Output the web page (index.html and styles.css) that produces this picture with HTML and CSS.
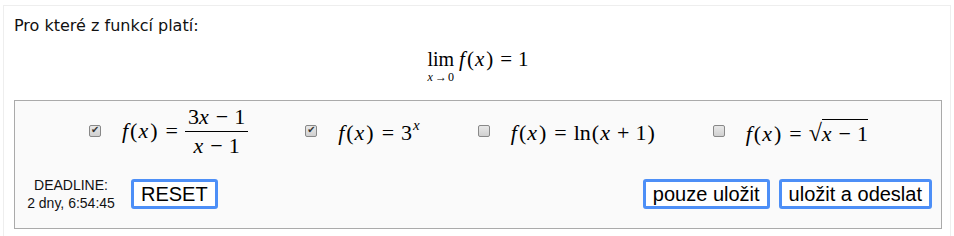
FILE: index.html
```html
<!DOCTYPE html>
<html lang="cs">
<head>
	<meta charset="UTF-8">
	<title>Úloha</title>
	<link rel="stylesheet" href="styles.css">
</head>
<body>
	<div class="panel">
		<p class="question">Pro které z funkcí platí:</p>
		<div class="limit">
			<span class="math">
				<span class="lim"><span class="lim-word">lim</span><span class="lim-sub"><i>x</i><span class="arrow">→</span>0</span></span>
				<i>f</i><span class="mo">(</span><i>x</i><span class="mo">)</span><span class="rel">=</span>1
			</span>
		</div>
		<div class="box">
			<div class="options">
				<label class="option">
					<input type="checkbox" checked>
					<span class="math"><i>f</i><span class="mo">(</span><i>x</i><span class="mo">)</span><span class="rel">=</span><span class="frac"><span class="num">3<i>x</i><span class="bin">−</span>1</span><span class="den"><i>x</i><span class="bin">−</span>1</span></span></span>
				</label>
				<label class="option">
					<input type="checkbox" checked>
					<span class="math"><i>f</i><span class="mo">(</span><i>x</i><span class="mo">)</span><span class="rel">=</span>3<sup><i>x</i></sup></span>
				</label>
				<label class="option">
					<input type="checkbox">
					<span class="math"><i>f</i><span class="mo">(</span><i>x</i><span class="mo">)</span><span class="rel">=</span>ln<span class="mo">(</span><i>x</i><span class="bin">+</span>1<span class="mo">)</span></span>
				</label>
				<label class="option">
					<input type="checkbox">
					<span class="math"><i>f</i><span class="mo">(</span><i>x</i><span class="mo">)</span><span class="rel">=</span><span class="sqrt"><span class="radical">√</span><span class="radicand"><i>x</i><span class="bin">−</span>1</span></span></span>
				</label>
			</div>
			<div class="actions">
				<div class="deadline">DEADLINE:<br>2 dny, 6:54:45</div>
				<button class="btn">RESET</button>
				<div class="spacer"></div>
				<button class="btn">pouze uložit</button>
				<button class="btn">uložit a odeslat</button>
			</div>
		</div>
	</div>
</body>
</html>
```

FILE: styles.css
```css
*{padding:0;margin:0;box-sizing:border-box;}
body{
	background:#fff;
	font-family:"DejaVu Sans",Verdana,sans-serif;
	color:#111;
}
.panel{
	margin:5px 3px 0 3px;
	border:1px solid #eee;
	border-bottom:none;
	padding:10px 8px 30px 10px;
}
.question{
	font-size:16px;
	line-height:20px;
}
.limit{
	text-align:center;
	margin-top:13px;
	height:51px;
}
.math{
	font-family:"Liberation Serif","DejaVu Serif",serif;
	font-size:22px;
	color:#000;
	white-space:nowrap;
}
.math i{font-style:italic;padding-right:1px;}
.math .mo{padding:0 1px;}
.math .rel{padding:0 7px;}
.math .bin{padding:0 6px;}
.math sup{font-size:15px;vertical-align:10px;line-height:0;padding-left:1px;}
.limit .math{display:inline-flex;align-items:flex-start;line-height:20px;font-size:21px;}
.limit .math .rel{padding:0 6px;}
.lim{
	display:inline-flex;
	flex-direction:column;
	align-items:center;
	margin-right:5px;
}
.lim-word{font-size:20px;line-height:20px;}
.lim-sub{font-size:12px;line-height:14px;margin-top:1px;white-space:nowrap;}
.lim-sub .arrow{padding:0 1px;}

.box{
	border:1px solid #aaa;
	background:#fafafa;
	padding:6px 9px 16px 10px;
}
.options{
	display:flex;
	justify-content:center;
	gap:57px;
	align-items:center;
	height:52px;
}
.option{
	display:flex;
	align-items:center;
	gap:21px;
}
.option input{
	appearance:none;
	-webkit-appearance:none;
	width:12px;
	height:12px;
	border:1px solid #888;
	border-radius:2px;
	background:linear-gradient(#e8e8e8,#d0d0d0);
	position:relative;
	margin-top:-4px;
}
.option input:checked::after{
	content:"✔";
	position:absolute;
	left:1px;
	top:-2px;
	font-size:10px;
	color:#333;
	font-family:"DejaVu Sans",sans-serif;
}
.frac{
	display:inline-flex;
	flex-direction:column;
	align-items:center;
	vertical-align:middle;
	line-height:20px;
	margin-top:-3px;
}
.frac .num{padding:0 3px 4px;}
.frac .den{border-top:1px solid #000;padding:4px 3px 0;width:100%;text-align:center;}
.radical{font-size:24px;}
.radicand{border-top:1px solid #000;padding-top:1px;}

.actions{
	display:flex;
	align-items:center;
	margin-top:17px;
}
.deadline{
	font-family:"Liberation Sans",Arial,sans-serif;
	font-size:14px;
	line-height:18px;
	text-align:center;
	width:92px;
	margin-right:14px;
}
.spacer{flex:1;}
.btn{
	font-family:"Liberation Sans",Arial,sans-serif;
	font-size:20px;
	height:30px;
	padding:0 7px;
	background:#fff;
	color:#000;
	border:3px solid #4d8ff7;
	border-radius:3px;
}
.btn + .btn{margin-left:9px;}
```
